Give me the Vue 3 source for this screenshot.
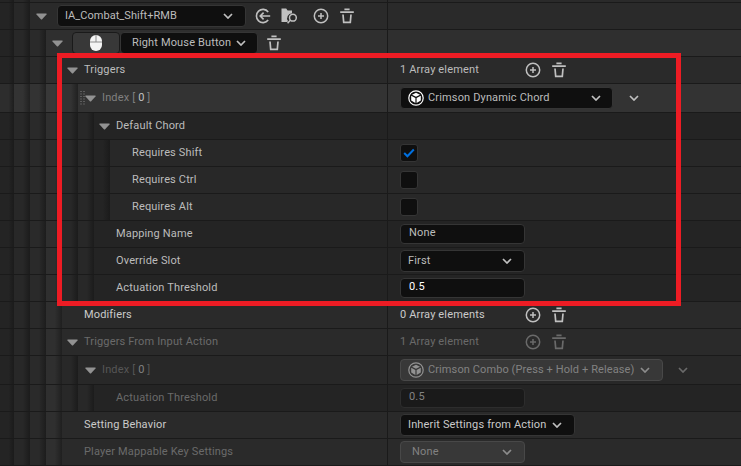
<template>
  <div class="details">
    <div
      v-for="(row, i) in rows"
      :key="i"
      class="row"
      :class="['depth-' + row.depth, 'row-' + row.kind, { disabled: row.disabled, hovered: row.hovered, bright: row.bright }]"
    >
      <div class="name-col">
        <span v-for="n in row.depth" :key="n" class="indent" :class="'level-' + n"></span>
        <div class="name-cell">
          <svg v-if="row.grip" class="grip" width="5" height="14" viewBox="0 0 5 14">
            <path d="M1 0v14M4 0v14" stroke="#858585" stroke-dasharray="1 1.5" />
          </svg>
          <span class="arrow-slot">
            <svg v-if="row.arrow" width="11" height="7" viewBox="0 0 11 7">
              <path d="M.5 .5h10v1L5.9 6.5h-.8L.5 1.5z" fill="#929292" />
            </svg>
          </span>

          <template v-if="row.kind === 'action'">
            <div class="box combo action-combo">
              <span>IA_Combat_Shift+RMB</span>
              <svg class="chevron" viewBox="0 0 10 6"><path d="M1 1l4 4 4-4" /></svg>
            </div>
            <svg class="icon use" viewBox="0 0 16 16">
              <path d="M13.2 3.9A6.6 6.6 0 1 0 13.2 12.1M15.2 8H5M8.6 4.6L5.2 8l3.4 3.4" />
            </svg>
            <svg class="icon browse" viewBox="0 0 17 16">
              <path class="solid" d="M.5 .5h4.7l1.4 2H11v2.7A5 5 0 0 0 7 13L6.2 14H.5z" />
              <circle cx="11.9" cy="9.7" r="3.4" />
              <path d="M9.5 12.1L6.6 15.2" />
            </svg>
            <svg class="icon plus" viewBox="0 0 16 16">
              <circle cx="8" cy="8" r="6.7" /><path d="M8 5v6M5 8h6" />
            </svg>
            <svg class="icon trash" viewBox="0 0 16 16">
              <path d="M1.2 4.2h13.6M5.4 1.3h5.2M4 6.5l.7 7.8h6.6l.7-7.8" />
            </svg>
          </template>

          <template v-else-if="row.kind === 'key'">
            <div class="box key-button">
              <svg width="14" height="18" viewBox="0 0 14 18">
                <rect x="1" y="1" width="12" height="16" rx="6" fill="#f4f4f4" />
                <path d="M1 8h12M7 1v7" stroke="#8c8c8c" stroke-width="1" />
              </svg>
            </div>
            <div class="box combo key-combo">
              <span>Right Mouse Button</span>
              <svg class="chevron" viewBox="0 0 10 6"><path d="M1 1l4 4 4-4" /></svg>
            </div>
            <svg class="icon trash" viewBox="0 0 16 16">
              <path d="M1.2 4.2h13.6M5.4 1.3h5.2M4 6.5l.7 7.8h6.6l.7-7.8" />
            </svg>
          </template>

          <span v-else-if="row.index !== undefined" class="label index">Index [ <b>{{ row.index }}</b> ]</span>
          <span v-else class="label">{{ row.label }}</span>
        </div>
      </div>

      <div class="value-col">
        <template v-if="row.kind === 'array'">
          <span class="count">{{ row.value }}</span>
          <svg class="icon plus" viewBox="0 0 16 16">
            <circle cx="8" cy="8" r="6.7" /><path d="M8 5v6M5 8h6" />
          </svg>
          <svg class="icon trash" viewBox="0 0 16 16">
            <path d="M1.2 4.2h13.6M5.4 1.3h5.2M4 6.5l.7 7.8h6.6l.7-7.8" />
          </svg>
        </template>

        <template v-else-if="row.kind === 'object'">
          <div class="box combo object-combo" :class="row.size">
            <svg class="object-icon" viewBox="0 0 16 16">
              <circle cx="8" cy="8" r="7.2" />
              <path class="solid" d="M8 2.8l4 1.9L8 6.8 4 4.7zM3.2 5.7l4.2 2.2v5L3.2 10.6zM12.8 5.7L8.6 7.9v5l4.2-2.3z" />
            </svg>
            <span>{{ row.value }}</span>
            <svg class="chevron" viewBox="0 0 10 6"><path d="M1 1l4 4 4-4" /></svg>
          </div>
          <svg class="chevron more" viewBox="0 0 10 6"><path d="M1 1l4 4 4-4" /></svg>
        </template>

        <div v-else-if="row.kind === 'check'" class="box checkbox">
          <svg v-if="row.value" width="12" height="10" viewBox="0 0 12 10">
            <path d="M1.2 5l3.2 3.2L10.8 1.5" fill="none" stroke="#0070e0" stroke-width="2" />
          </svg>
        </div>

        <div v-else-if="row.kind === 'input'" class="box input" :class="{ number: row.number }">{{ row.value }}</div>

        <div v-else-if="row.kind === 'select'" class="box combo select" :class="row.size">
          <span>{{ row.value }}</span>
          <svg class="chevron" viewBox="0 0 10 6"><path d="M1 1l4 4 4-4" /></svg>
        </div>
      </div>
    </div>
    <div class="highlight"></div>
  </div>
</template>

<script setup>
const rows = [
  { depth: 2, kind: 'stub' },
  { depth: 2, kind: 'action', arrow: true },
  { depth: 3, kind: 'key', arrow: true },
  { depth: 4, kind: 'array', arrow: true, label: 'Triggers', value: '1 Array element' },
  { depth: 5, kind: 'object', arrow: true, grip: true, hovered: true, index: 0, value: 'Crimson Dynamic Chord', size: 'chord' },
  { depth: 6, kind: 'group', arrow: true, label: 'Default Chord' },
  { depth: 7, kind: 'check', label: 'Requires Shift', value: true },
  { depth: 7, kind: 'check', label: 'Requires Ctrl', value: false },
  { depth: 7, kind: 'check', label: 'Requires Alt', value: false },
  { depth: 6, kind: 'input', label: 'Mapping Name', value: 'None' },
  { depth: 6, kind: 'select', label: 'Override Slot', value: 'First' },
  { depth: 6, kind: 'input', number: true, label: 'Actuation Threshold', value: '0.5' },
  { depth: 4, kind: 'array', bright: true, label: 'Modifiers', value: '0 Array elements' },
  { depth: 4, kind: 'array', arrow: true, disabled: true, label: 'Triggers From Input Action', value: '1 Array element' },
  { depth: 5, kind: 'object', arrow: true, disabled: true, index: 0, value: 'Crimson Combo (Press + Hold + Release)', size: 'release' },
  { depth: 6, kind: 'input', disabled: true, label: 'Actuation Threshold', value: '0.5' },
  { depth: 4, kind: 'select', bright: true, label: 'Setting Behavior', value: 'Inherit Settings from Action', size: 'behavior' },
  { depth: 4, kind: 'select', disabled: true, label: 'Player Mappable Key Settings', value: 'None', size: 'settings' },
]
</script>

<style>
body {
  background: #1a1a1a;
}
</style>

<style scoped>
.details {
  position: relative;
  width: 741px;
  height: 466px;
  overflow: hidden;
  background: #1a1a1a;
  color: #bcbcbc;
  font: 11px/16px Roboto, sans-serif;
  letter-spacing: 0.15px;
  white-space: nowrap;
}
.row {
  display: flex;
  height: 26px;
  border-bottom: 1px solid #1a1a1a;
  background: #2a2a2a;
}
.row-stub {
  height: 2px;
}
.row-object {
  height: 28px;
}
.depth-3 {
  background: #2f2f2f;
}
.depth-6 {
  background: #242424;
}
.depth-5,
.depth-7 {
  background: #282828;
}
.row.hovered {
  background: #333;
}
.name-col {
  display: flex;
  flex: none;
  width: 387px;
  border-right: 1px solid #1a1a1a;
}
.indent {
  flex: none;
  width: 16px;
  background: linear-gradient(90deg, transparent 55%, rgba(10, 10, 10, 0.42)), #282828;
}
.level-1 {
  width: 14px;
  background: linear-gradient(90deg, transparent 60%, rgba(10, 10, 10, 0.35)), #242424;
}
.level-3 {
  background: linear-gradient(90deg, transparent 55%, rgba(10, 10, 10, 0.42)), #2a2a2a;
}
.level-4 {
  background: linear-gradient(90deg, transparent 55%, rgba(10, 10, 10, 0.42)), #2f2f2f;
}
.level-7 {
  background: linear-gradient(90deg, transparent 55%, rgba(10, 10, 10, 0.35)), #242424;
}
.hovered .indent {
  background: linear-gradient(90deg, transparent 55%, rgba(10, 10, 10, 0.45)), #333;
}
.hovered .level-1 {
  background: linear-gradient(90deg, transparent 60%, rgba(10, 10, 10, 0.45)), #2d2d2d;
}
.hovered .level-4 {
  background: linear-gradient(90deg, transparent 55%, rgba(10, 10, 10, 0.45)), #383838;
}
.name-cell {
  position: relative;
  display: flex;
  flex: 1;
  align-items: center;
}
.arrow-slot {
  display: flex;
  width: 17px;
  padding-left: 5px;
}
.row-object .arrow-slot {
  padding-left: 7px;
}
.row-action .arrow-slot,
.row-key .arrow-slot {
  width: 20px;
  padding-left: 6px;
}
.grip {
  position: absolute;
  left: 2px;
  top: 7px;
}
.label {
  padding-bottom: 1px;
}
.index {
  color: #808080;
}
.index b {
  color: #c0c0c0;
  font-weight: 400;
}
.box {
  display: flex;
  flex: none;
  align-items: center;
  box-sizing: border-box;
  border: 1px solid #353535;
  border-radius: 4px;
  background: #0f0f0f;
}
.combo {
  height: 22px;
  padding: 0 11px 1px 7px;
  justify-content: space-between;
}
.chevron {
  flex: none;
  width: 10px;
  height: 6px;
  fill: none;
  stroke: #c0c0c0;
  stroke-width: 1.7;
}
.icon {
  flex: none;
  width: 16px;
  height: 16px;
  fill: none;
  stroke: #c0c0c0;
  stroke-width: 1.5;
}
.icon .solid {
  fill: #c0c0c0;
  stroke: none;
}
.trash {
  stroke-width: 1.7;
}
.action-combo {
  width: 189px;
  margin-left: 1px;
  padding-right: 12px;
}
.action-combo span {
  letter-spacing: 0.03px;
}
.use {
  margin-left: 9px;
  stroke-width: 1.6;
}
.browse {
  width: 17px;
  margin-left: 10px;
}
.row-action .plus {
  margin-left: 15px;
}
.row-action .trash {
  margin-left: 10px;
}
.key-button {
  width: 48px;
  height: 22px;
  justify-content: center;
  border-color: #1a1a1a;
  background: #383838;
}
.key-combo {
  width: 138px;
  padding-left: 11px;
}
.row-key .trash {
  margin-left: 8px;
}
.value-col {
  display: flex;
  flex: 1;
  align-items: center;
  padding-left: 12px;
}
.count {
  width: 125px;
  padding-bottom: 1px;
}
.row-array .trash {
  margin-left: 10px;
}
.object-combo span {
  flex: 1;
  margin-left: 4px;
}
.object-icon {
  width: 16px;
  height: 16px;
  margin-top: 1px;
  fill: none;
  stroke: #fff;
  stroke-width: 1.2;
}
.object-icon .solid {
  fill: #fff;
  stroke: none;
}
.chord {
  width: 213px;
}
.release {
  width: 263px;
  padding-right: 12px;
}
.release span {
  letter-spacing: 0.1px;
}
.more {
  margin-left: 16px;
}
.release + .more {
  margin-left: 15px;
}
.checkbox {
  width: 18px;
  height: 18px;
  justify-content: center;
  border-radius: 3px;
}
.input {
  width: 125px;
  height: 20px;
  padding: 0 8px 2px;
}
.number {
  color: #fff;
}
.select {
  width: 125px;
  padding-right: 12px;
}
.behavior {
  width: 175px;
}
.settings {
  padding-left: 11px;
}
.bright {
  color: #cacaca;
}
.disabled .label,
.disabled .count {
  color: #6a6a6a;
}
.disabled .index {
  color: #565656;
}
.disabled .index b {
  color: #808080;
}
.disabled .icon {
  stroke: #6a6a6a;
}
.disabled .box {
  color: #828282;
}
.disabled .combo {
  border-color: #484848;
  background: #383838;
}
.disabled .input {
  border-color: #2d2d2d;
  background: #1a1a1a;
}
.disabled .chevron {
  stroke: #8c8c8c;
}
.disabled .more {
  stroke: #6a6a6a;
}
.disabled .object-icon {
  stroke: #929292;
}
.disabled .object-icon .solid {
  fill: #929292;
}
.highlight {
  position: absolute;
  left: 57px;
  top: 53px;
  box-sizing: border-box;
  width: 624px;
  height: 253px;
  border: 5px solid #ed1c24;
}
</style>
